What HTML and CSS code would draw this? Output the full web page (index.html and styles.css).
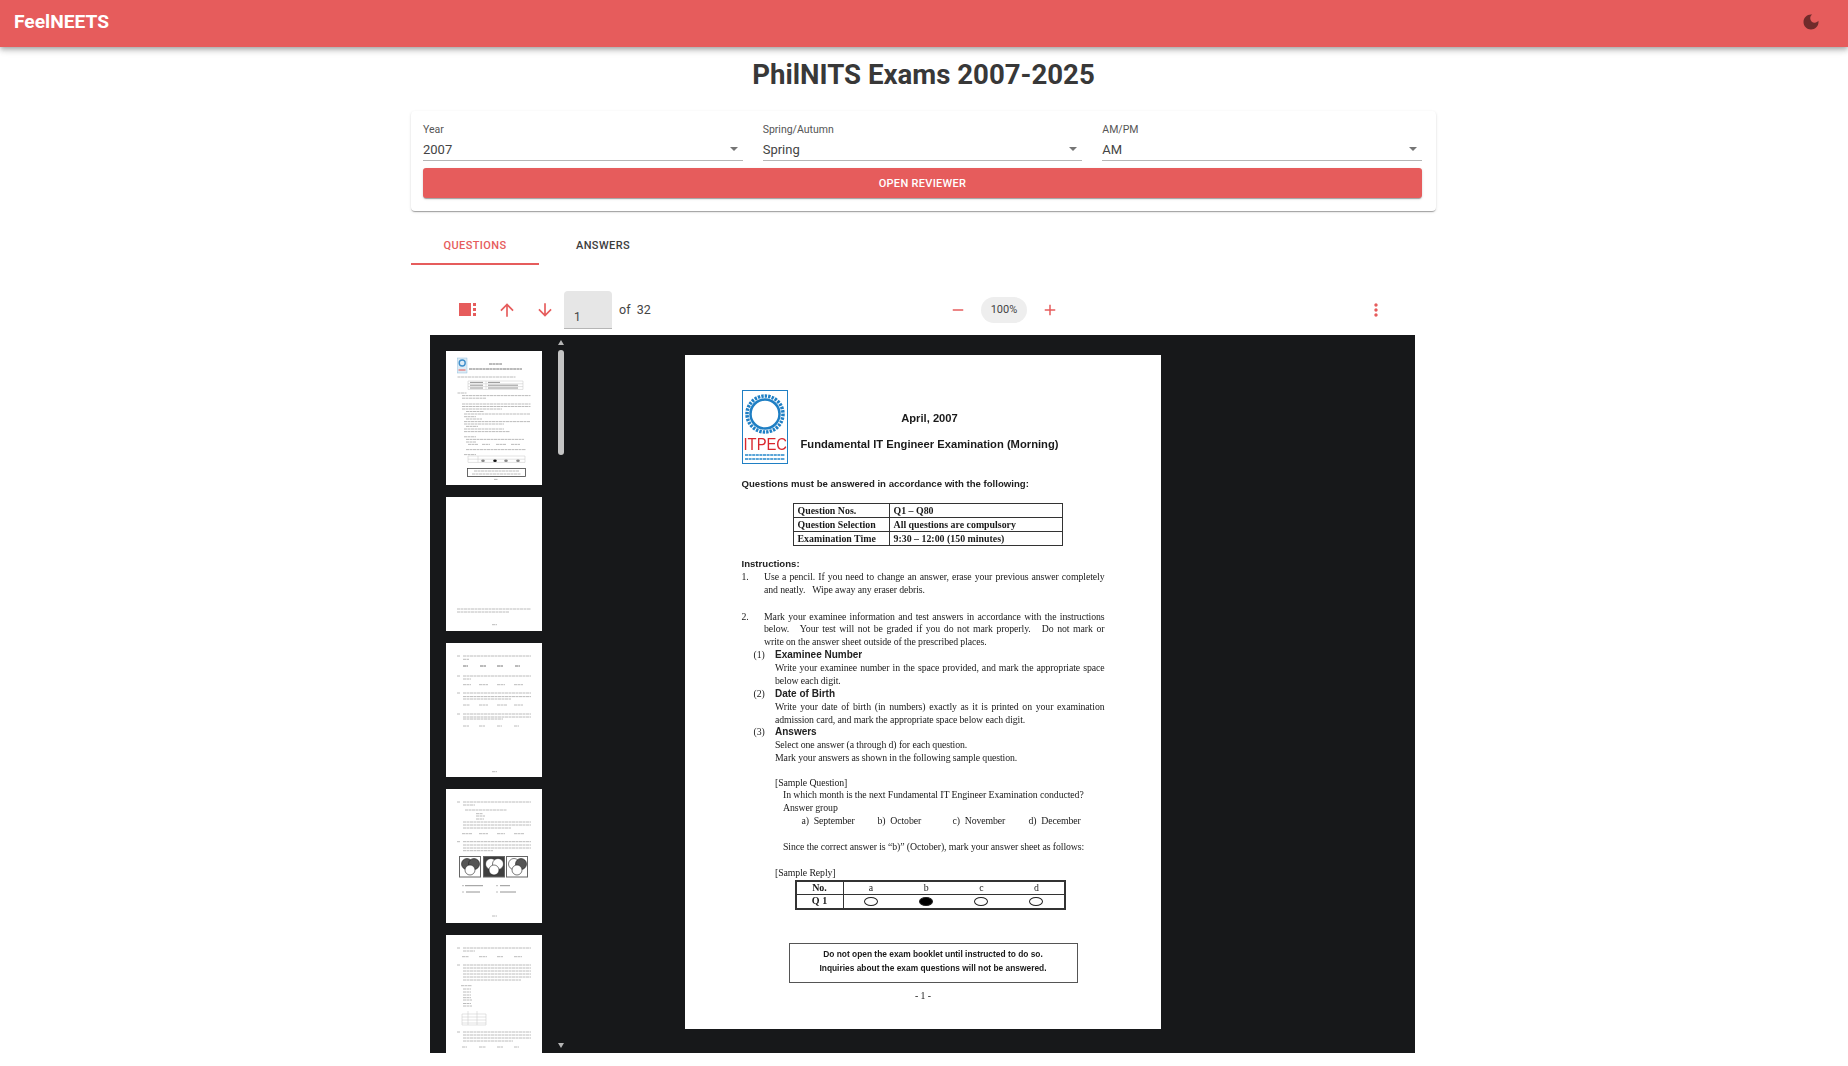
FILE: index.html
```html
<!DOCTYPE html>
<html lang="en">
<head>
  <meta charset="UTF-8">
  <title>FeelNEETS - PhilNITS Exams</title>
  <link rel="stylesheet" href="styles.css">
</head>
<body>
<!-- top bar -->
<header class="appbar">
  <span class="brand">FeelNEETS</span>
  <svg class="moon" viewBox="0 0 24 24"><path d="M12 3c-4.97 0-9 4.03-9 9s4.03 9 9 9 9-4.03 9-9c0-.46-.04-.92-.1-1.36-.98 1.37-2.58 2.26-4.4 2.26-2.98 0-5.4-2.42-5.4-5.4 0-1.81.89-3.42 2.26-4.4-.44-.06-.9-.1-1.36-.1z"/></svg>
</header>

<main class="content">
  <h1>PhilNITS Exams 2007-2025</h1>

  <!-- exam picker -->
  <section class="card">
    <div class="selects">
      <div class="field">
        <label>Year</label>
        <div class="select"><span>2007</span><i class="caret"></i></div>
      </div>
      <div class="field">
        <label>Spring/Autumn</label>
        <div class="select"><span>Spring</span><i class="caret"></i></div>
      </div>
      <div class="field">
        <label>AM/PM</label>
        <div class="select"><span>AM</span><i class="caret"></i></div>
      </div>
    </div>
    <button class="open-btn">OPEN REVIEWER</button>
  </section>

  <div class="tabs">
    <div class="tab active">QUESTIONS</div>
    <div class="tab">ANSWERS</div>
  </div>

  <!-- pdf viewer -->
  <section class="pdf">
    <div class="toolbar">
      <div class="tool-left">
        <svg class="icon sidebar-icon" viewBox="0 0 17 13"><path d="M0 0h12v13H0zM14 0h3v3h-3zM14 5h3v3h-3zM14 10h3v3h-3z"/></svg>
        <svg class="icon arrow-up" viewBox="0 0 24 24"><path d="M4 12l1.41 1.41L11 7.83V20h2V7.83l5.58 5.59L20 12l-8-8-8 8z"/></svg>
        <svg class="icon arrow-down" viewBox="0 0 24 24"><path d="M20 12l-1.41-1.41L13 16.17V4h-2v12.17l-5.58-5.59L4 12l8 8 8-8z"/></svg>
        <div class="page-input">1</div>
        <span class="page-total">of&nbsp; 32</span>
      </div>
      <div class="tool-zoom">
        <svg class="icon" viewBox="0 0 24 24"><path d="M19 13H5v-2h14v2z"/></svg>
        <span class="zoom-pill">100%</span>
        <svg class="icon" viewBox="0 0 24 24"><path d="M19 13h-6v6h-2v-6H5v-2h6V5h2v6h6v2z"/></svg>
      </div>
      <svg class="icon kebab" viewBox="0 0 24 24"><path d="M12 8c1.1 0 2-.9 2-2s-.9-2-2-2-2 .9-2 2 .9 2 2 2zm0 2c-1.1 0-2 .9-2 2s.9 2 2 2 2-.9 2-2-.9-2-2-2zm0 6c-1.1 0-2 .9-2 2s.9 2 2 2 2-.9 2-2-.9-2-2-2z"/></svg>
    </div>

    <div class="viewer">
      <aside class="side">
        <div class="thumbs">
          <!-- thumbnail 1 -->
          <svg class="thumb" viewBox="0 0 96 134">
            <rect x="11.5" y="7" width="9.5" height="15" fill="#dcebf6" stroke="#7fb2d8" stroke-width=".4"/>
            <circle cx="16.2" cy="12" r="3" fill="none" stroke="#3f8fcb" stroke-width="1.4"/>
            <path class="mark" d="M12.5 19h7" stroke="#e58a8a"/>
            <path class="bold" d="M43 13h13M23 18h53"/>
            <path class="text" d="M11.5 26h58M11.5 42h9"/>
            <path class="rule" d="M22 30h55v8.4H22zM22 32.8h55M22 35.6h55M40 30v8.4"/>
            <path class="dark" d="M24 31.4h13M24 34.2h13M24 37h13M42 31.4h12M42 34.2h30M42 37h30"/>
            <path class="text" d="M16 44.6h68.500M16 47.200h24M16 53h68.500M16 55.500h68.500M16 58h40M20 60.500h18M18 63h66.500M18 65.700h12M20 68h16M18 70.600h66.500M18 73h40M20 75.400h12M18 78h40M18 80.600h46M18 85.800h12M20 88.400h58M20 91h10M22 93.400h10M36 93.400h8M50 93.400h10M65 93.400h9M20 98.600h60M18 103.600h12"/>
            <path class="rule" d="M22 105h57v6.400H22zM22 108.200h57M32 105v6.400"/>
            <ellipse cx="37" cy="109.800" rx="1.800" ry="1.200" fill="#888"/>
            <ellipse cx="49" cy="109.800" rx="1.800" ry="1.200" fill="#111"/>
            <ellipse cx="60" cy="109.800" rx="1.800" ry="1.200" fill="#888"/>
            <ellipse cx="72" cy="109.800" rx="1.800" ry="1.200" fill="#888"/>
            <rect x="21.500" y="117.500" width="58" height="8" fill="none" stroke="#444" stroke-width=".8"/>
            <path class="text" d="M28 120h45M26 123h49M48 128.400h4"/>
          </svg>
          <!-- thumbnail 2 -->
          <svg class="thumb" viewBox="0 0 96 134">
            <path class="text" d="M11 112h74M11 115h52M46 127.700h5"/>
          </svg>
          <!-- thumbnail 3 -->
          <svg class="thumb" viewBox="0 0 96 134">
            <path class="text" d="M11 13h3M17 13h68M17 16.300h6M11 33h3M17 33h68M17 36h8M17 41.700h8M33 41.700h9M51 41.700h8M68 41.700h9M11 50h3M17 50h68M17 53.600h68M17 56h48M17 62h7M33 62h9M51 62h10M68 62h9M11 71h3M17 71h68M17 74h68M17 76h40M17 83h6M33 83h6M51 83h5M68 83h5M46 128.700h5"/>
            <path class="bold" d="M17 23h5M34 23h6M51 23h6M69 23h5"/>
          </svg>
          <!-- thumbnail 4 -->
          <svg class="thumb" viewBox="0 0 96 134">
            <path class="text" d="M11 13h3M17 13h68M17 16h12M19 21h42M30 24.700h7M30 27h9M30 30h8M17 33h68M17 36h68M17 39h48M16 44.700h10M33 44.700h9M51 44.700h8M68 44.700h10M11 52.700h3M17 52.700h68M17 56h68M17 59h68M17 61.700h30M46 127h5"/>
            <rect class="venn-box" x="13.500" y="67.500" width="21" height="20.500"/>
            <rect class="venn-box hatch" x="37.500" y="67.500" width="21" height="20.500"/>
            <rect class="venn-box" x="60.500" y="67.500" width="21" height="20.500"/>
            <circle class="venn" cx="21" cy="75" r="5.500"/><circle class="venn" cx="28" cy="75" r="5.500"/><circle class="venn light" cx="24" cy="81" r="5"/>
            <circle class="venn light" cx="45" cy="75" r="5.500"/><circle class="venn light" cx="52" cy="75" r="5.500"/><circle class="venn light" cx="48" cy="81" r="5"/>
            <circle class="venn light" cx="68" cy="75" r="5.500"/><circle class="venn" cx="75" cy="75" r="5.500"/><circle class="venn light" cx="71" cy="81" r="5"/>
            <path class="dark" d="M19 96.700h18M54 96.700h10M20 103h14M54 103h16"/>
            <path class="text" d="M16 96.700h2M50 96.700h2M16 103h2M50 103h2"/>
          </svg>
          <!-- thumbnail 5 -->
          <svg class="thumb" viewBox="0 0 96 134">
            <path class="text" d="M11 13h3M17 13h68M17 16h12M16 21.700h7M33 21.700h8M51 21.700h6M68 21.700h8M11 30h3M17 30h68M17 33h68M17 36h68M17 39h68M17 42h68M17 45h58M15 50.700h11M17 54h8M17 57h8M17 60h8M17 62.700h8M17 65h9M17 68.500h8M17 71h9M11 97h3M17 97h68M17 100h68M17 103h68M17 106h50M16 112h5M33 112h7M51 112h6M68 112h5"/>
            <path class="rule" d="M16 79h24v11H16zM22 76v14M31 76v14M16 82h24M16 85h24M16 88h24"/>
          </svg>
        </div>
        <div class="scrollbar">
          <i class="sb-up"></i>
          <div class="sb-thumb"></div>
          <i class="sb-down"></i>
        </div>
      </aside>

      <!-- first page of the exam -->
      <article class="page">
        <div class="page-head">
          <svg class="logo" viewBox="0 0 46 74">
            <rect x=".5" y=".5" width="45" height="73" fill="#fff" stroke="#1f7fc4"/>
            <circle cx="23" cy="24" r="18" fill="none" stroke="#1f7fc4" stroke-width="3.500" stroke-dasharray="2.400 1.100"/>
            <circle cx="23" cy="24" r="14.500" fill="none" stroke="#1f7fc4" stroke-width="2.500"/>
            <text class="logo-name" transform="translate(1.500 60) scale(1 1.12)">ITPEC</text>
            <path d="M3 65h40M3 69h40" stroke="#5aa5d8" stroke-width="1.800" stroke-dasharray="3 .6" fill="none"/>
          </svg>
          <div class="page-title">
            <p>April, 2007</p>
            <p>Fundamental IT Engineer Examination (Morning)</p>
          </div>
        </div>

        <p class="sans">Questions must be answered in accordance with the following:</p>

        <table class="info">
          <tr><td>Question Nos.</td><td>Q1 – Q80</td></tr>
          <tr><td>Question Selection</td><td>All questions are compulsory</td></tr>
          <tr><td>Examination Time</td><td>9:30 – 12:00 (150 minutes)</td></tr>
        </table>

        <p class="sans instr">Instructions:</p>
        <div class="item">
          <span class="num">1.</span>
          <div>
            <p class="just">Use a pencil. If you need to change an answer, erase your previous answer completely</p>
            <p>and neatly. &nbsp; Wipe away any eraser debris.</p>
          </div>
        </div>
        <p class="blank gap-wide"></p>
        <div class="item">
          <span class="num">2.</span>
          <div>
            <p class="just">Mark your examinee information and test answers in accordance with the instructions</p>
            <p class="just">below. &nbsp; Your test will not be graded if you do not mark properly. &nbsp; Do not mark or</p>
            <p>write on the answer sheet outside of the prescribed places.</p>
          </div>
        </div>
        <div class="sub">
          <span class="sub-num">(1)</span>
          <div>
            <p class="sans">Examinee Number</p>
            <p class="just">Write your examinee number in the space provided, and mark the appropriate space</p>
            <p>below each digit.</p>
          </div>
        </div>
        <div class="sub">
          <span class="sub-num">(2)</span>
          <div>
            <p class="sans">Date of Birth</p>
            <p class="just">Write your date of birth (in numbers) exactly as it is printed on your examination</p>
            <p>admission card, and mark the appropriate space below each digit.</p>
          </div>
        </div>
        <div class="sub">
          <span class="sub-num">(3)</span>
          <div>
            <p class="sans">Answers</p>
            <p>Select one answer (a through d) for each question.</p>
            <p>Mark your answers as shown in the following sample question.</p>
            <p class="blank gap-narrow"></p>
            <p>[Sample Question]</p>
            <p class="indent">In which month is the next Fundamental IT Engineer Examination conducted?</p>
            <p class="indent">Answer group</p>
            <div class="choices">
              <span>a)&nbsp; September</span>
              <span>b)&nbsp; October</span>
              <span>c)&nbsp; November</span>
              <span>d)&nbsp; December</span>
            </div>
            <p class="blank"></p>
            <p class="indent">Since the correct answer is “b)” (October), mark your answer sheet as follows:</p>
            <p class="blank"></p>
            <p>[Sample Reply]</p>
          </div>
        </div>

        <table class="reply">
          <tr><th>No.</th><td>a</td><td>b</td><td>c</td><td>d</td></tr>
          <tr><th>Q 1</th><td><i class="bubble"></i></td><td><i class="bubble filled"></i></td><td><i class="bubble"></i></td><td><i class="bubble"></i></td></tr>
        </table>

        <div class="notice">
          <p>Do not open the exam booklet until instructed to do so.</p>
          <p>Inquiries about the exam questions will not be answered.</p>
        </div>
        <p class="page-no">- 1 -</p>
      </article>
    </div>
  </section>
</main>
</body>
</html>
```

FILE: styles.css
```css
html, body {
  margin: 0;
  padding: 0;
  height: 100%;
  overflow: hidden;
}
body {
  font-family: Roboto, "Liberation Sans", sans-serif;
  background-color: #fff;
  color: #333;
}
p {
  margin: 0;
}

/* top bar */
.appbar {
  height: 47px;
  box-sizing: border-box;
  padding: 0 27px 4px 14px;
  display: flex;
  align-items: center;
  justify-content: space-between;
  background-color: #e65c5c;
  box-shadow: 0 2px 4px -1px rgba(0,0,0,0.2), 0 4px 5px rgba(0,0,0,0.14), 0 1px 10px rgba(0,0,0,0.12);
}
.brand {
  color: #fff;
  font-size: 19.2px;
  font-weight: 700;
}
.moon {
  width: 20px;
  height: 20px;
  fill: #702b2b;
}

.content {
  width: 1025px;
  margin-left: 411px;
}
h1 {
  margin: 0;
  height: 64px;
  line-height: 56px;
  font-size: 27.6px;
  font-weight: 700;
  text-align: center;
  color: #383838;
}

/* exam picker */
.card {
  padding: 12px 14px 12px 12px;
  height: 100px;
  box-sizing: border-box;
  border-radius: 4px;
  background-color: #fff;
  box-shadow: 0 2px 1px -1px rgba(0,0,0,0.2), 0 1px 1px rgba(0,0,0,0.14), 0 1px 3px rgba(0,0,0,0.12);
}
.selects {
  display: grid;
  grid-template-columns: repeat(3, 1fr);
  gap: 20px;
}
.field label {
  display: block;
  height: 17px;
  padding-top: 1px;
  box-sizing: border-box;
  font-size: 10.5px;
  line-height: 12px;
  color: #555;
}
.select {
  height: 18px;
  padding: 0 5px 2px 0;
  display: flex;
  align-items: center;
  justify-content: space-between;
  font-size: 13px;
  color: #444;
  border-bottom: 1px solid #b5b5b5;
}
.caret {
  width: 0;
  height: 0;
  border-left: 4px solid transparent;
  border-right: 4px solid transparent;
  border-top: 4px solid #757575;
}
.open-btn {
  display: block;
  width: 100%;
  height: 30px;
  margin-top: 7px;
  border: none;
  border-radius: 3px;
  background-color: #e65c5c;
  color: #fff;
  font-family: inherit;
  font-size: 11px;
  font-weight: 500;
  letter-spacing: 0.3px;
  box-shadow: 0 2px 1px -1px rgba(0,0,0,0.2), 0 1px 1px rgba(0,0,0,0.14), 0 1px 3px rgba(0,0,0,0.12);
}

/* tabs */
.tabs {
  display: flex;
  margin-top: 6px;
}
.tab {
  width: 128px;
  height: 48px;
  box-sizing: border-box;
  padding-top: 5px;
  line-height: 48px;
  text-align: center;
  font-size: 11px;
  font-weight: 500;
  letter-spacing: 0.4px;
  color: #3d3d3d;
}
.tab.active {
  color: #e65c5c;
  border-bottom: 2px solid #e65c5c;
}

/* pdf viewer */
.pdf {
  margin: 20px 21px 0 19px;
}
.toolbar {
  height: 49px;
  margin-bottom: 1px;
  display: grid;
  grid-template-columns: 519px 110px 1fr;
  align-items: center;
}
.tool-left {
  display: flex;
  align-items: center;
  padding-left: 29px;
}
.icon {
  width: 20px;
  height: 20px;
  fill: #e65c5c;
}
.sidebar-icon {
  width: 17px;
  height: 13px;
}
.arrow-up {
  margin-left: 20.5px;
}
.arrow-down {
  margin-left: 18px;
}
.page-input {
  width: 48px;
  height: 38px;
  margin: 1px 0 0 9.5px;
  padding: 19px 0 0 10px;
  box-sizing: border-box;
  background-color: #e6e6e6;
  border-bottom: 1px solid #b5b5b5;
  border-radius: 4px 4px 0 0;
  font-size: 12px;
  line-height: 14px;
  color: #444;
}
.page-total {
  margin-left: 7px;
  font-size: 12.5px;
  color: #444;
}
.tool-zoom {
  display: flex;
  align-items: center;
  justify-content: space-between;
}
.tool-zoom .icon {
  width: 18px;
  height: 18px;
}
.zoom-pill {
  width: 46px;
  height: 26px;
  border-radius: 13px;
  background-color: #eee;
  text-align: center;
  line-height: 26px;
  font-size: 11px;
  color: #444;
}
.kebab {
  justify-self: end;
  margin-right: 29px;
}

.viewer {
  height: 718px;
  display: grid;
  grid-template-columns: 140px 1fr 140px;
  overflow: hidden;
  background-color: #17181a;
}
.side {
  display: flex;
  height: 718px;
}
.thumbs {
  width: 125px;
  box-sizing: border-box;
  padding: 16px 0 0 16px;
  display: flex;
  flex-direction: column;
  gap: 12px;
  flex-shrink: 0;
}
.thumb {
  display: block;
  width: 96px;
  height: 134px;
  flex-shrink: 0;
  background-color: #fff;
}
.thumb > * {
  filter: blur(0.25px);
}
.thumb path {
  fill: none;
}
.thumb .text {
  stroke: #b4b4b4;
  stroke-width: 0.9;
  stroke-dasharray: 3 0.5;
}
.thumb .bold {
  stroke: #777;
  stroke-width: 1;
  stroke-dasharray: 3 0.4;
}
.thumb .dark {
  stroke: #888;
  stroke-width: 0.9;
}
.thumb .rule {
  stroke: #c4c4c4;
  stroke-width: 0.5;
}
.thumb .mark {
  stroke-width: 1.5;
}
.venn-box {
  fill: #fff;
  stroke: #666;
  stroke-width: 1;
}
.venn-box.hatch {
  fill: #3f3f3f;
}
.venn {
  fill: #555;
  stroke: #222;
  stroke-width: 0.6;
}
.venn.light {
  fill: #fff;
}
.scrollbar {
  width: 12px;
  padding: 5px 0;
  box-sizing: border-box;
  display: flex;
  flex-direction: column;
  align-items: center;
}
.sb-up {
  width: 0;
  height: 0;
  border-left: 3px solid transparent;
  border-right: 3px solid transparent;
  border-bottom: 5px solid #b5b5b5;
}
.sb-thumb {
  width: 6px;
  height: 105px;
  margin-top: 5px;
  border-radius: 3px;
  background-color: #c4c4c4;
}
.sb-down {
  width: 0;
  height: 0;
  margin-top: auto;
  border-left: 3px solid transparent;
  border-right: 3px solid transparent;
  border-top: 5px solid #b5b5b5;
}

/* exam page */
.page {
  justify-self: center;
  width: 476px;
  height: 674px;
  margin-top: 20px;
  padding: 35px 56px 0 57px;
  box-sizing: border-box;
  background-color: #fff;
  color: #1a1a1a;
  font-family: "Liberation Serif", serif;
  font-size: 9.8px;
  letter-spacing: -0.09px;
  line-height: 12.875px;
  filter: blur(0.2px);
}
.page-head {
  display: flex;
}
.logo {
  width: 46px;
  height: 74px;
  flex-shrink: 0;
}
.logo-name {
  font-family: "Liberation Sans", sans-serif;
  font-size: 14.8px;
  letter-spacing: 0;
  fill: #d9272e;
}
.page-title {
  width: 258px;
  margin-left: 13px;
  padding-top: 22px;
  text-align: center;
  font-family: "Liberation Sans", sans-serif;
  font-size: 11.2px;
  letter-spacing: 0;
  font-weight: 700;
}
.page-title p + p {
  margin-top: 13px;
}
.sans {
  font-family: "Liberation Sans", sans-serif;
  font-weight: 700;
  font-size: 9.6px;
  letter-spacing: 0;
  color: #222;
}
.sub .sans {
  font-size: 10px;
}
.page-head + .sans {
  margin-top: 14px;
}
.info {
  width: 270px;
  margin: 12px 0 0 51px;
  border-collapse: collapse;
  table-layout: fixed;
  font-weight: 700;
  font-size: 9.9px;
  letter-spacing: 0;
}
.info td {
  height: 14px;
  padding: 1px 0 0 4px;
  border: 1px solid #333;
  line-height: 12px;
  box-sizing: border-box;
}
.info td:first-child {
  width: 96px;
}
.instr {
  margin-top: 12px;
}
.item {
  display: flex;
}
.num {
  width: 22.5px;
  flex-shrink: 0;
}
.item > div,
.sub > div {
  flex: 1;
  min-width: 0;
}
.just {
  white-space: nowrap;
  text-align: justify;
  text-align-last: justify;
}
.blank {
  height: 12.875px;
}
.blank.gap-wide {
  height: 14px;
}
.blank.gap-narrow {
  height: 11.5px;
}
.sub {
  display: flex;
}
.sub-num {
  width: 21.5px;
  margin-left: 12px;
  flex-shrink: 0;
}
.indent {
  padding-left: 8px;
}
.choices {
  display: grid;
  grid-template-columns: 76px 75px 76px 1fr;
  padding-left: 26.5px;
}
.reply {
  width: 271px;
  height: 30px;
  margin-left: 53px;
  border-collapse: collapse;
  table-layout: fixed;
  border: 2px solid #333;
  line-height: 12px;
}
.reply th {
  width: 46px;
  border: 1px solid #333;
  padding: 0;
  font-size: 10px;
  letter-spacing: 0;
}
.reply td {
  padding: 0;
  text-align: center;
  border-top: 1px solid #333;
  border-bottom: 1px solid #333;
}
.bubble {
  display: block;
  width: 14px;
  height: 9px;
  margin: 0 auto;
  box-sizing: border-box;
  border: 1px solid #222;
  border-radius: 50%;
}
.bubble.filled {
  background-color: #000;
}
.notice {
  width: 289px;
  height: 40px;
  margin: 33px 0 0 47px;
  padding-top: 3px;
  box-sizing: border-box;
  border: 1px solid #555;
  text-align: center;
  font-family: "Liberation Sans", sans-serif;
  font-weight: 700;
  font-size: 8.4px;
  letter-spacing: 0;
  line-height: 14.5px;
}
.page-no {
  margin-top: 7px;
  text-align: center;
}
```
